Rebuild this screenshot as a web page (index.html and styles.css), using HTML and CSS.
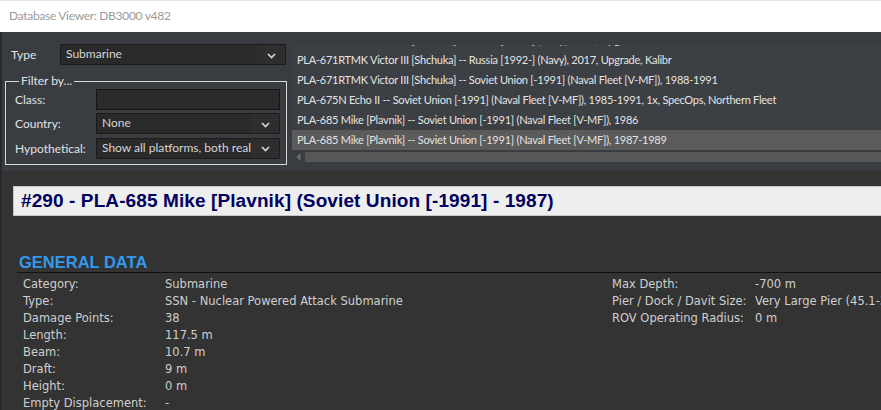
FILE: index.html
```html
<!DOCTYPE html>
<html>
<head>
<meta charset="utf-8">
<link rel="stylesheet" href="styles.css">
</head>
<body>
<div class="titlebar">Database Viewer: DB3000 v482</div>
<div class="app">
  <div class="toppanel">
    <div class="filters">
      <div class="typerow">
        <span class="lbl type-lbl">Type</span>
        <div class="combo type-combo">
          <span class="combo-text">Submarine</span>
          <span class="combo-btn"><svg width="9" height="6" viewBox="0 0 9 6"><path d="M1 1 L4.5 4.5 L8 1" fill="none" stroke="#d8d8d8" stroke-width="1.6"/></svg></span>
        </div>
      </div>
      <fieldset class="group">
        <legend>Filter by...</legend>
        <div class="frow">
          <span class="lbl">Class:</span>
          <div class="textbox"></div>
        </div>
        <div class="frow">
          <span class="lbl">Country:</span>
          <div class="combo">
            <span class="combo-text">None</span>
            <span class="combo-btn"><svg width="9" height="6" viewBox="0 0 9 6"><path d="M1 1 L4.5 4.5 L8 1" fill="none" stroke="#d8d8d8" stroke-width="1.6"/></svg></span>
          </div>
        </div>
        <div class="frow">
          <span class="lbl">Hypothetical:</span>
          <div class="combo">
            <span class="combo-text">Show all platforms, both real and hypothetical</span>
            <span class="combo-btn"><svg width="9" height="6" viewBox="0 0 9 6"><path d="M1 1 L4.5 4.5 L8 1" fill="none" stroke="#d8d8d8" stroke-width="1.6"/></svg></span>
          </div>
        </div>
      </fieldset>
    </div>
    <div class="listwrap">
      <div class="list">
        <div class="list-inner">
          <div class="row">PLA-671RTMK Victor III [Shchuka] -- Russia [1992-] (Navy), 2014, Upgrade</div>
          <div class="row">PLA-671RTMK Victor III [Shchuka] -- Russia [1992-] (Navy), 2017, Upgrade, Kalibr</div>
          <div class="row">PLA-671RTMK Victor III [Shchuka] -- Soviet Union [-1991] (Naval Fleet [V-MF]), 1988-1991</div>
          <div class="row">PLA-675N Echo II -- Soviet Union [-1991] (Naval Fleet [V-MF]), 1985-1991, 1x, SpecOps, Northern Fleet</div>
          <div class="row">PLA-685 Mike [Plavnik] -- Soviet Union [-1991] (Naval Fleet [V-MF]), 1986</div>
          <div class="row selected">PLA-685 Mike [Plavnik] -- Soviet Union [-1991] (Naval Fleet [V-MF]), 1987-1989</div>
        </div>
      </div>
      <div class="hscroll">
        <span class="arrow"><svg width="5" height="8" viewBox="0 0 5 8"><path d="M4.5 0 L0.5 4 L4.5 8 Z" fill="#6e6e6e"/></svg></span>
        <span class="thumb"></span>
      </div>
    </div>
  </div>
  <div class="viewer">
    <div class="heading">#290 - PLA-685 Mike [Plavnik] (Soviet Union [-1991] - 1987)</div>
    <h2 class="section">GENERAL DATA</h2>
    <div class="datacols">
      <table class="data left">
        <tr><td class="k">Category:</td><td>Submarine</td></tr>
        <tr><td class="k">Type:</td><td>SSN - Nuclear Powered Attack Submarine</td></tr>
        <tr><td class="k">Damage Points:</td><td>38</td></tr>
        <tr><td class="k">Length:</td><td>117.5 m</td></tr>
        <tr><td class="k">Beam:</td><td>10.7 m</td></tr>
        <tr><td class="k">Draft:</td><td>9 m</td></tr>
        <tr><td class="k">Height:</td><td>0 m</td></tr>
        <tr><td class="k">Empty Displacement:</td><td>-</td></tr>
      </table>
      <table class="data right">
        <tr><td class="k">Max Depth:</td><td>-700 m</td></tr>
        <tr><td class="k">Pier / Dock / Davit Size:</td><td>Very Large Pier (45.1-300 m)</td></tr>
        <tr><td class="k">ROV Operating Radius:</td><td>0 m</td></tr>
      </table>
    </div>
  </div>
</div>
</body>
</html>
```

FILE: styles.css
```css
* { box-sizing: border-box; }
html, body {
  margin: 0;
  padding: 0;
  width: 881px;
  height: 410px;
  overflow: hidden;
  background: #333333;
}
body {
  font-family: Lato, "Noto Sans", sans-serif;
  font-size: 12px;
  color: #e2e2e2;
}
.titlebar {
  height: 32px;
  background: #ffffff;
  border-top: 1px solid #e4e4e4;
  color: #9a9a9a;
  font-size: 12px;
  letter-spacing: -0.3px;
  line-height: 30px;
  padding-left: 9px;
  white-space: nowrap;
}
.app {
  border-left: 2px solid #27292c;
  height: 378px;
  overflow: hidden;
}
.toppanel {
  height: 139px;
  background: #393d41;
  display: flex;
}
.filters {
  width: 288px;
  flex: none;
  padding: 12px 0 0 3px;
}
.typerow {
  display: flex;
  align-items: center;
  height: 21px;
}
.lbl {
  white-space: nowrap;
}
.type-lbl {
  width: 55px;
  padding-left: 6px;
}
.combo {
  flex: 1;
  min-width: 0;
  display: flex;
  height: 21px;
  background: #2a2a2a;
  border: 1px solid #1b1b1b;
  border-radius: 1px;
  overflow: hidden;
}
.type-combo {
  width: 226px;
  flex: none;
}
.combo-text {
  flex: 1;
  min-width: 0;
  padding-left: 5px;
  line-height: 18px;
  white-space: nowrap;
  overflow: hidden;
  color: #d6d6d6;
}
.combo-btn {
  width: 28px;
  flex: none;
  display: flex;
  align-items: center;
  justify-content: center;
  background: #2e2e2e;
  padding-top: 2px;
}
.group {
  margin: 8px 0 0 0;
  min-width: 0;
  width: 282px;
  height: 92px;
  border: 1px solid #d8d8d8;
  padding: 0 6px 0 9px;
}
.group legend {
  padding: 0 2px;
  margin-left: 4px;
  color: #e2e2e2;
  line-height: 16px;
}
.frow {
  display: flex;
  align-items: center;
  height: 20px;
  margin-bottom: 4.5px;
}
.frow .lbl {
  width: 81px;
  flex: none;
}
.frow .combo {
  height: 21px;
}
.textbox {
  flex: 1;
  min-width: 0;
  height: 21px;
  background: #2a2a2a;
  border: 1px solid #151515;
}
.listwrap {
  flex: 1;
  padding-left: 2px;
  min-width: 0;
}
.list {
  margin-top: 13px;
  height: 105px;
  overflow: hidden;
  background: #3c3f43;
}
.list-inner {
  transform: translateY(-15px);
}
.row {
  height: 20px;
  line-height: 20px;
  padding-left: 5px;
  white-space: nowrap;
  color: #e4e4e4;
  font-size: 11px;
  letter-spacing: -0.25px;
}
.row.selected {
  background: #5b5b5b;
}
.hscroll {
  margin-top: 2px;
  height: 10px;
  display: flex;
}
.arrow {
  width: 13px;
  display: flex;
  align-items: center;
  justify-content: center;
  flex: none;
}
.thumb {
  flex: 1;
  background: #575757;
}
.viewer {
  background: #333333;
  padding: 15px 0 0 11px;
  width: 1300px;
}
.heading {
  height: 30px;
  background: #eeeeee;
  border: 1px solid #c6c6c6;
  border-right: none;
  color: #00005e;
  font-family: "Liberation Sans", Arial, sans-serif;
  font-weight: bold;
  font-size: 19px;
  letter-spacing: 0.1px;
  line-height: 28px;
  padding-left: 7px;
  white-space: nowrap;
}
.section {
  margin: 37px 0 0 4px;
  padding: 0 0 0 2px;
  color: #3399ee;
  font-family: "Liberation Sans", Arial, sans-serif;
  font-weight: bold;
  font-size: 16.5px;
  line-height: 19px;
  border-bottom: 1px solid #111111;
}
.datacols {
  display: flex;
  align-items: flex-start;
  margin-top: 3px;
  margin-left: 10px;
}
.data {
  border-collapse: collapse;
  font-family: "DejaVu Sans", Verdana, sans-serif;
  font-size: 11.5px;
  color: #cfcfcf;
}
.data td {
  padding: 0;
  height: 17px;
  line-height: 17px;
  white-space: nowrap;
  vertical-align: middle;
}
.data .k {
  width: 142px;
}
.data.left {
  width: 589px;
}
.data.left td:last-child {
  width: 447px;
}
.data.right .k {
  width: 143px;
}
```
